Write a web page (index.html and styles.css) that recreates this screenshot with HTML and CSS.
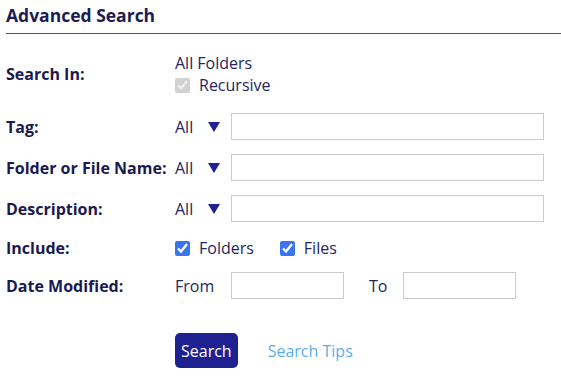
FILE: index.html
```html
<!DOCTYPE html>
<html lang="en">
<head>
    <meta charset="UTF-8">
    <title>Advanced Search</title>
    <link rel="stylesheet" href="styles.css">
</head>
<body>
    <div class="panel">
        <h1 class="title">Advanced Search</h1>

        <form class="search-form">
            <!-- Search In -->
            <div class="row row-search-in">
                <label class="field-label">Search In:</label>
                <div class="stack">
                    <span class="value">All Folders</span>
                    <label class="check disabled">
                        <input type="checkbox" checked disabled>
                        <span>Recursive</span>
                    </label>
                </div>
            </div>

            <div class="row">
                <label class="field-label">Tag:</label>
                <span class="picker">All <span class="arrow"></span></span>
                <input type="text" class="text-input wide">
            </div>

            <div class="row">
                <label class="field-label">Folder or File Name:</label>
                <span class="picker">All <span class="arrow"></span></span>
                <input type="text" class="text-input wide">
            </div>

            <div class="row">
                <label class="field-label">Description:</label>
                <span class="picker">All <span class="arrow"></span></span>
                <input type="text" class="text-input wide">
            </div>

            <div class="row row-include">
                <label class="field-label">Include:</label>
                <label class="check">
                    <input type="checkbox" checked>
                    <span>Folders</span>
                </label>
                <label class="check">
                    <input type="checkbox" checked>
                    <span>Files</span>
                </label>
            </div>

            <div class="row">
                <label class="field-label">Date Modified:</label>
                <span class="value from">From</span>
                <input type="text" class="text-input short">
                <span class="value to">To</span>
                <input type="text" class="text-input short">
            </div>

            <div class="row actions">
                <button type="submit" class="btn">Search</button>
                <a href="#" class="tips">Search Tips</a>
            </div>
        </form>
    </div>
</body>
</html>
```

FILE: styles.css
```css
body {
    margin: 0;
    font-family: "Open Sans", Arial, sans-serif;
    background-color: #ffffff;
    color: #23265e;
}

.panel {
    padding-left: 6px;
}

.title {
    font-size: 17.5px;
    font-weight: 700;
    color: #1c1c52;
    margin: 0;
    padding: 4px 0 6px;
    line-height: 23px;
    border-bottom: 1px solid #555;
}

.search-form {
    padding-top: 18px;
}

.row {
    display: flex;
    align-items: center;
    height: 27px;
    margin-bottom: 14px;
}

.row-search-in {
    height: 44px;
    margin-bottom: 17px;
}

.row-include {
    height: 24px;
    margin-bottom: 12px;
}

.field-label {
    width: 169px;
    flex-shrink: 0;
    font-size: 16px;
    font-weight: 700;
    color: #1a1a4e;
}

.stack {
    display: flex;
    flex-direction: column;
}

.value {
    font-size: 16px;
    line-height: 22px;
}

.picker {
    display: flex;
    align-items: center;
    width: 56px;
    font-size: 16px;
}

.arrow {
    width: 0;
    height: 0;
    margin-left: 15px;
    border-left: 6px solid transparent;
    border-right: 6px solid transparent;
    border-top: 10px solid #1f2190;
}

.text-input {
    height: 27px;
    box-sizing: border-box;
    border: 1px solid #cccccc;
    padding: 2px 6px;
    font-size: 15px;
}

.wide {
    width: 313px;
}

.short {
    width: 113px;
}

.from {
    width: 56px;
}

.to {
    margin: 0 16px 0 25px;
}

.check {
    display: flex;
    align-items: center;
    font-size: 16px;
    line-height: 22px;
    margin-right: 26px;
}

.check input {
    width: 15px;
    height: 15px;
    margin: 0 9px 0 0;
    accent-color: #3b74f0;
}

.actions {
    height: 35px;
    margin-top: 34px;
    padding-left: 169px;
}

.btn {
    background-color: #1f2190;
    color: white;
    border: none;
    border-radius: 5px;
    height: 35px;
    padding: 0 6px;
    font-family: inherit;
    font-size: 16px;
    cursor: pointer;
}

.tips {
    margin-left: 30px;
    color: #5aaef0;
    font-size: 16px;
    text-decoration: none;
}
```
